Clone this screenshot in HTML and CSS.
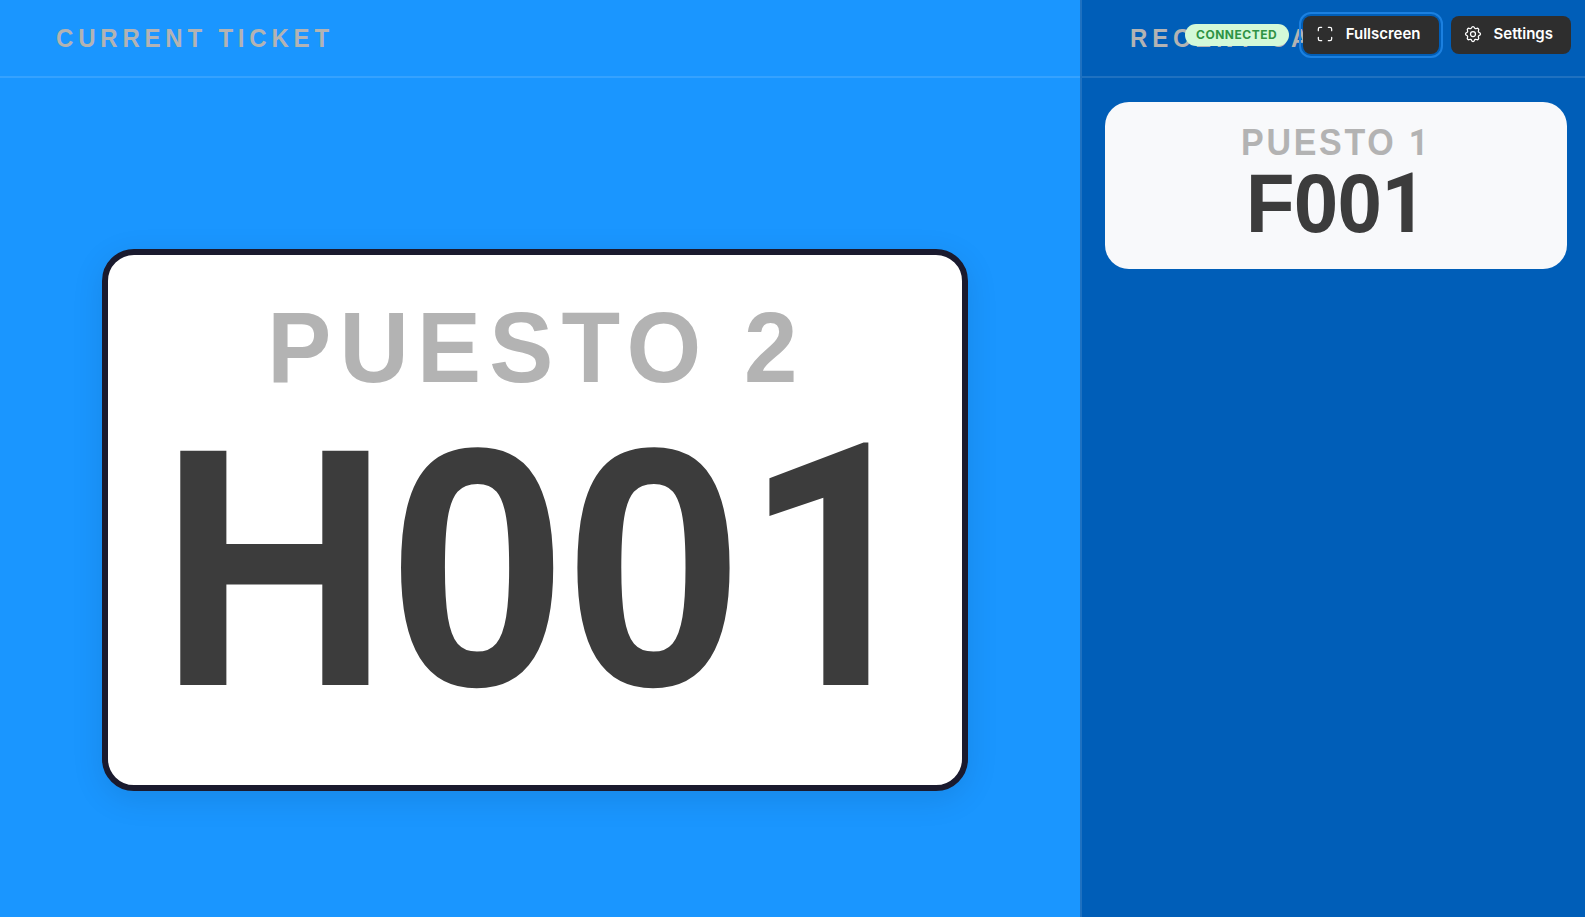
FILE: index.html
```html
<!DOCTYPE html>
<html lang="en">
<head>
<meta charset="utf-8">
<title>Ticket display</title>
<link rel="stylesheet" href="styles.css">
</head>
<body>
<div class="screen">
  <section class="current">
    <header class="head"><h1 class="head-title">CURRENT TICKET</h1></header>
    <div class="stage">
      <div class="ticket">
        <div class="ticket-desk">PUESTO 2</div>
        <div class="ticket-num">H00<span class="one">1</span></div>
      </div>
    </div>
  </section>
  <aside class="recent">
    <header class="head"><h2 class="head-title">RECENT CALLS</h2></header>
    <div class="list">
      <div class="mini">
        <div class="mini-desk">PUESTO <span class="one">1</span></div>
        <div class="mini-num">F00<span class="one">1</span></div>
      </div>
    </div>
  </aside>
</div>
<div class="controls">
  <span class="pill">CONNECTED</span>
  <button class="btn btn-focus" type="button">
    <svg class="ico" viewBox="0 0 24 24"><path d="M4 8v-2a2 2 0 0 1 2 -2h2"/><path d="M4 16v2a2 2 0 0 0 2 2h2"/><path d="M16 4h2a2 2 0 0 1 2 2v2"/><path d="M16 20h2a2 2 0 0 0 2 -2v-2"/></svg>
    <span class="btn-label">Fullscreen</span>
  </button>
  <button class="btn" type="button">
    <svg class="ico" viewBox="0 0 24 24"><path d="M10.325 4.317c.426 -1.756 2.924 -1.756 3.35 0a1.724 1.724 0 0 0 2.573 1.066c1.543 -.94 3.31 .826 2.37 2.37a1.724 1.724 0 0 0 1.065 2.572c1.756 .426 1.756 2.924 0 3.35a1.724 1.724 0 0 0 -1.066 2.573c.94 1.543 -.826 3.31 -2.37 2.37a1.724 1.724 0 0 0 -2.572 1.065c-.426 1.756 -2.924 1.756 -3.35 0a1.724 1.724 0 0 0 -2.573 -1.066c-1.543 .94 -3.31 -.826 -2.37 -2.37a1.724 1.724 0 0 0 -1.065 -2.572c-1.756 -.426 -1.756 -2.924 0 -3.35a1.724 1.724 0 0 0 1.066 -2.573c-.94 -1.543 .826 -3.31 2.37 -2.37c1 .608 2.296 .07 2.572 -1.065z"/><circle cx="12" cy="12" r="3"/></svg>
    <span class="btn-label">Settings</span>
  </button>
</div>
</body>
</html>
```
FILE: styles.css
```css
* { box-sizing: border-box; }
html, body { margin: 0; height: 100%; overflow: hidden; }
body { font-family: "Liberation Sans", Arial, sans-serif; background: #1a96ff; }
.screen { display: flex; height: 917px; }
.current { flex: 0 0 1080px; display: flex; flex-direction: column; background: #1a96ff; }
.recent { flex: 1; display: flex; flex-direction: column; background: #005eb8; border-left: 2px solid rgba(255,255,255,.12); }
.head { height: 78px; flex: none; display: flex; align-items: center; padding: 2px 56px 0; border-bottom: 2px solid rgba(255,255,255,.12); }
.recent .head { padding-left: 48px; }
.head-title { margin: 0; font-size: 24px; font-weight: 700; letter-spacing: .2em; color: #b3b3b3; white-space: nowrap; transform: scaleY(1.04); }
.stage { flex: 1; display: flex; align-items: center; justify-content: center; padding: 44px 10px 0 0; }
.ticket { width: 866px; height: 542px; border: 6px solid #1a1a2e; border-radius: 32px; background: #fff; box-shadow: 0 8px 32px rgba(0,0,0,.1); display: flex; flex-direction: column; align-items: center; padding-top: 38px; }
.ticket-desk { margin-left: 3px; font-size: 96px; line-height: 1.15; font-weight: 700; letter-spacing: .085em; color: #b3b3b3; transform: scaleY(1.04); }
.ticket-num { margin-top: 4px; margin-left: 14px; font-size: 320px; line-height: 1; font-weight: 700; letter-spacing: -.005em; color: #3c3c3c; transform: scaleY(1.064); }
.one { font-family: Roboto, sans-serif; font-weight: 700; }
.ticket-num .one { margin-left: 2px; }
.list { padding: 24px 18px 0 23px; }
.mini { height: 167px; border-radius: 24px; background: #f8f9fb; display: flex; flex-direction: column; align-items: center; padding-top: 20px; }
.mini-desk { font-size: 34px; line-height: 40px; font-weight: 700; letter-spacing: .08em; color: #b3b3b3; transform: scaleY(1.08); }
.mini-num { margin-top: 2px; font-size: 80px; line-height: 1; font-weight: 700; letter-spacing: -.01em; color: #3c3c3c; transform: scaleY(1.05); }
.controls { position: absolute; top: 16px; right: 14px; display: flex; align-items: center; gap: 12px; }
.pill { height: 22px; padding: 0 11.5px; margin-right: 2px; border-radius: 11px; background: #d3f9d8; color: #2f9344; font: 700 12px/22px Inter, sans-serif; letter-spacing: .5px; }
.btn { height: 38px; display: flex; align-items: center; gap: 11px; padding: 0 18px 2px 12px; border: 0; border-radius: 8px; background: #2e2e2e; color: #fff; font: 600 15px Inter, sans-serif; }
.btn-label { padding-bottom: 1px; }
.btn-focus { outline: 2px solid #1b80e0; outline-offset: 2px; }
.ico { width: 20px; height: 20px; fill: none; stroke: #fff; stroke-width: 1.5; stroke-linecap: round; stroke-linejoin: round; }
```
